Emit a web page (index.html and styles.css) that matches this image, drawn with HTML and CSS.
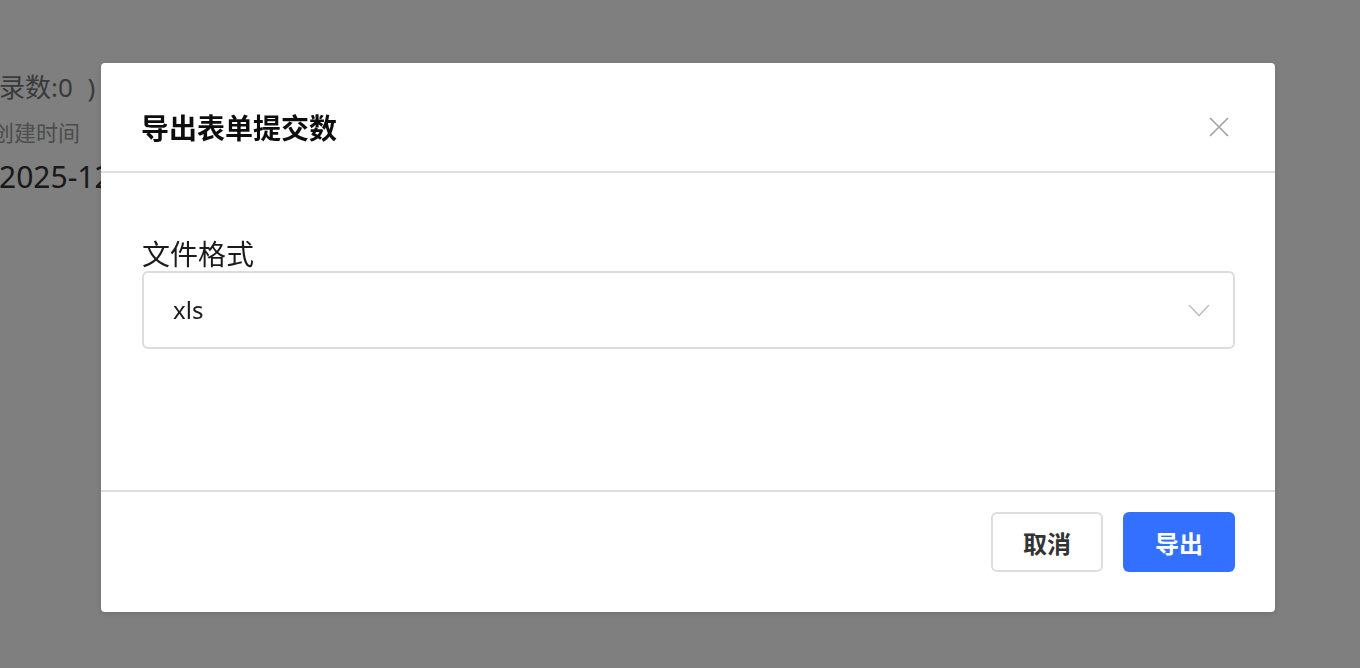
FILE: index.html
```html
<!DOCTYPE html>
<html lang="zh-CN">
<head>
<meta charset="utf-8">
<title>导出表单提交数</title>
<link rel="stylesheet" href="styles.css">
</head>
<body>
<div class="page">
  <div class="count-row">表单提交（记录数:0 )</div>
  <div class="col-head">创建时间</div>
  <div class="col-value">2025-12-01 10:00</div>
</div>
<div class="mask"></div>
<div class="dialog">
  <div class="dialog-header">
    <div class="dialog-title">导出表单提交数</div>
    <button class="close-btn" aria-label="关闭">
      <svg width="20" height="20" viewBox="0 0 20 20"><path d="M1.5 1.5L18.5 18.5M18.5 1.5L1.5 18.5" stroke="#a3a3a3" stroke-width="1.7" fill="none" stroke-linecap="round"/></svg>
    </button>
  </div>
  <div class="dialog-body">
    <div class="field-label">文件格式</div>
    <div class="select">
      <span class="select-value">xls</span>
      <svg class="chevron" width="22" height="13" viewBox="0 0 22 13"><path d="M1 1L11 11.5L21 1" stroke="#c2c2c2" stroke-width="1.6" fill="none"/></svg>
    </div>
  </div>
  <div class="dialog-footer">
    <button class="btn btn-cancel">取消</button>
    <button class="btn btn-primary">导出</button>
  </div>
</div>
</body>
</html>
```

FILE: styles.css
```css
html, body {
  margin: 0;
  padding: 0;
  width: 1360px;
  height: 668px;
  overflow: hidden;
  background: #ffffff;
  font-family: "Noto Sans", "Noto Sans CJK SC", sans-serif;
}

.page {
  display: flex;
  flex-direction: column;
  padding-top: 72px;
}

.count-row {
  font-size: 26px;
  line-height: 30px;
  color: #747474;
  margin-left: -157px;
  word-spacing: 8px;
  white-space: nowrap;
}

.col-head {
  font-size: 22px;
  line-height: 30px;
  color: #9a9a9a;
  margin-top: 15px;
  margin-left: -8px;
  white-space: nowrap;
}

.col-value {
  font-size: 30px;
  line-height: 40px;
  color: #333333;
  margin-top: 10px;
  margin-left: -1px;
  white-space: nowrap;
}

.mask {
  position: fixed;
  inset: 0;
  background: rgba(0, 0, 0, 0.5);
}

.dialog {
  position: fixed;
  left: 101px;
  top: 63px;
  width: 1174px;
  background: #ffffff;
  border-radius: 4px;
  box-shadow: 0 2px 6px rgba(0, 0, 0, 0.12);
  display: flex;
  flex-direction: column;
  font-family: "Noto Sans", "Noto Sans CJK SC", sans-serif;
}

.dialog-header {
  height: 88px;
  display: flex;
  align-items: center;
  justify-content: space-between;
  padding: 20px 44px 0 40px;
  border-bottom: 2px solid #dedede;
}

.dialog-title {
  font-size: 28px;
  font-weight: 700;
  color: #0d0d0d;
  line-height: 36px;
  padding-top: 2px;
}

.close-btn {
  width: 24px;
  height: 24px;
  padding: 0;
  margin: 0;
  border: none;
  background: transparent;
  display: flex;
  align-items: center;
  justify-content: center;
  margin-top: 0;
}

.dialog-body {
  padding: 65px 40px 141px 41px;
  display: flex;
  flex-direction: column;
}

.field-label {
  font-size: 28px;
  line-height: 33px;
  color: #1a1a1a;
}

.select {
  height: 74px;
  border: 2px solid #dcdcdc;
  border-radius: 6px;
  display: flex;
  align-items: center;
  justify-content: space-between;
  padding: 0 23px 0 29px;
}

.select-value {
  font-size: 24px;
  color: #1a1a1a;
  line-height: 30px;
}

.chevron {
  display: block;
}

.dialog-footer {
  border-top: 2px solid #dedede;
  padding: 20px 40px 40px 40px;
  display: flex;
  justify-content: flex-end;
  gap: 20px;
}

.btn {
  width: 112px;
  height: 60px;
  border-radius: 6px;
  font-family: "Noto Sans CJK SC", sans-serif;
  font-size: 24px;
  font-weight: 600;
  padding: 0;
  display: flex;
  align-items: center;
  justify-content: center;
}

.btn-cancel {
  background: #ffffff;
  border: 2px solid #dddddd;
  color: #333333;
}

.btn-primary {
  background: #3370ff;
  border: none;
  color: #ffffff;
}
```
